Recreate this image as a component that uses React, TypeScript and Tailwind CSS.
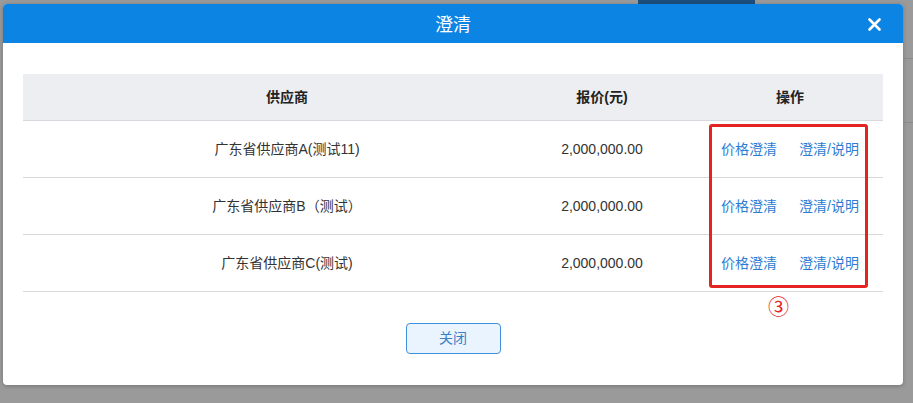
import React from 'react';

const rows = [
  { name: '广东省供应商A(测试11)', price: '2,000,000.00' },
  { name: '广东省供应商B（测试）', price: '2,000,000.00' },
  { name: '广东省供应商C(测试)', price: '2,000,000.00' },
];

const App = () => {
  return (
    <div
      className="relative w-[913px] h-[403px] overflow-hidden bg-[#9a9a9a]"
      style={{ fontFamily: '"Liberation Sans", "Noto Sans CJK SC", sans-serif' }}
    >
      {/* page behind the overlay */}
      <div className="absolute left-[638px] top-0 w-[117px] h-[4px] bg-[#1d4f7d]" />
      <div className="absolute left-[905px] top-[58px] w-[8px] h-px bg-[#8a8a8a]" />
      <div className="absolute left-[905px] top-[122px] w-[8px] h-px bg-[#8a8a8a]" />

      {/* dialog */}
      <div className="absolute left-[3px] top-[4px] w-[900px] h-[381px] bg-white rounded-[4px] shadow-[0_1px_4px_rgba(0,0,0,0.25)] overflow-hidden">
        <div className="relative h-[39px] bg-[#0b84e4] flex items-center justify-center">
          <span className="text-[18px] text-white" style={{ fontFamily: '"Noto Sans CJK SC", sans-serif' }}>
            澄清
          </span>
          <svg className="absolute right-[22px] top-[14px]" width="13" height="13" viewBox="0 0 13 13">
            <path d="M1.5 1.5 L11.5 11.5 M11.5 1.5 L1.5 11.5" stroke="white" strokeWidth="2.6" strokeLinecap="round" />
          </svg>
        </div>

        <div className="px-[20px] pt-[31px]">
          <div className="relative w-[860px] text-[14px] text-[#333]">
            <div className="grid grid-cols-[528px_102px_230px] h-[47px] bg-[#eceef1] border-b border-[#d5d8dc] font-bold text-[#222]">
              <div className="flex items-center justify-center">供应商</div>
              <div className="flex items-center justify-center">报价(元)</div>
              <div className="flex items-center justify-center pl-[44px]">操作</div>
            </div>
            {rows.map((r, i) => (
              <div key={i} className="grid grid-cols-[528px_102px_230px] h-[57px] border-b border-[#d9d9d9]">
                <div className="flex items-center justify-center">{r.name}</div>
                <div className="flex items-center justify-center">{r.price}</div>
                <div className="flex items-center justify-center pl-[44px] gap-[22px] text-[#2b7cd3]">
                  <span>价格澄清</span>
                  <span>澄清/说明</span>
                </div>
              </div>
            ))}

            {/* annotation */}
            <div className="absolute left-[686px] top-[50px] w-[159px] h-[164px] border-[3px] border-[#e42420] rounded-[3px]" />
            <div className="absolute left-[745px] top-[221px] text-[21px] leading-none text-[#e42420]" style={{ fontFamily: '"Noto Sans CJK SC", sans-serif' }}>
              ③
            </div>
          </div>

          <div className="flex justify-center mt-[31px]">
            <button className="w-[95px] h-[31px] rounded-[4px] border border-[#3f8fdc] bg-[#e9f4fe] text-[14px] text-[#3a7fc8]">
              关闭
            </button>
          </div>
        </div>
      </div>
    </div>
  );
};

export default App;
